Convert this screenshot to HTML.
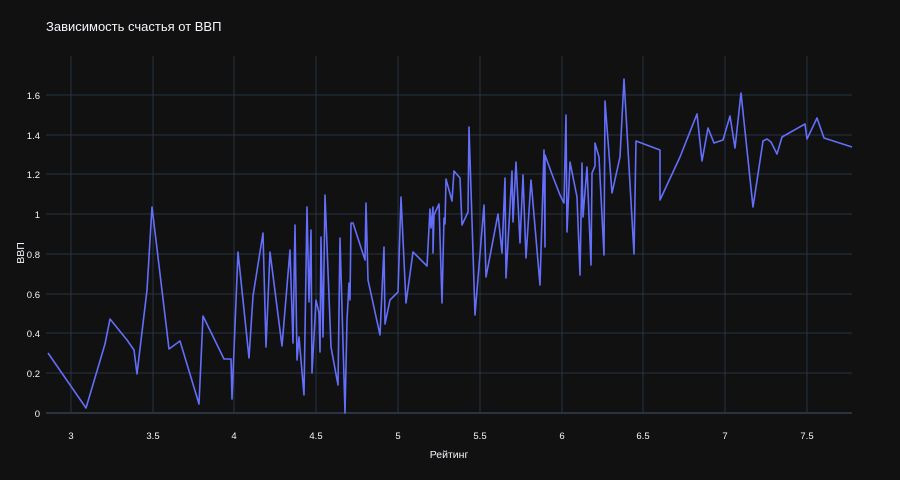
<!DOCTYPE html>
<html><head><meta charset="utf-8"><style>
body{margin:0;background:#111;width:900px;height:480px;overflow:hidden;font-family:"Liberation Sans",sans-serif}
</style></head><body>
<svg width="900" height="480" xmlns="http://www.w3.org/2000/svg" style="display:block">
<rect width="900" height="480" fill="#111"/>
<g stroke="#283442" stroke-width="1">
<line x1="71" y1="56" x2="71" y2="413"/><line x1="153" y1="56" x2="153" y2="413"/><line x1="234" y1="56" x2="234" y2="413"/><line x1="316" y1="56" x2="316" y2="413"/><line x1="398" y1="56" x2="398" y2="413"/><line x1="480" y1="56" x2="480" y2="413"/><line x1="562" y1="56" x2="562" y2="413"/><line x1="643" y1="56" x2="643" y2="413"/><line x1="725" y1="56" x2="725" y2="413"/><line x1="807" y1="56" x2="807" y2="413"/>
<line x1="46" y1="95" x2="852" y2="95"/><line x1="46" y1="135" x2="852" y2="135"/><line x1="46" y1="174" x2="852" y2="174"/><line x1="46" y1="214" x2="852" y2="214"/><line x1="46" y1="254" x2="852" y2="254"/><line x1="46" y1="294" x2="852" y2="294"/><line x1="46" y1="333" x2="852" y2="333"/><line x1="46" y1="373" x2="852" y2="373"/>
</g>
<line x1="46" y1="413" x2="852" y2="413" stroke="#283442" stroke-width="2"/>
<polyline fill="none" stroke="#636efa" stroke-width="1.6" stroke-linejoin="round" points="48,353 86,408 105,344 110,319 127,340 134,350 137,374 147,290 152,207 169,349 180,341 199,404 203,316 224,359 231,359 232,399 238,252 249,358 253,296 263,233 266,347 270,252 282,346 290,250 293,343 295,225 297,360 299,337 304,395 307,207 309,302 311,230 312,373 316,300 319,313 320,352 321,237 323,337 325,195 331,347 338,385 340,238 345,413 347,320 349,283 350,300 351,223 353,223 365,260 366,203 368,280 380,335 384,247 385,324 390,300 398,292 401,197 406,303 413,252 427,266 430,209 431,228 433,207 433,253 434,215 439,204 442,303 444,218 445,224 446,179 452,201 454,171 460,178 462,225 468,212 469,127 475,315 484,205 486,277 498,214 502,253 505,178 506,278 512,171 513,222 516,162 520,243 523,175 526,258 531,180 540,285 544,150 545,247 545,155 553,177 560,195 564,203 566,115 567,232 570,162 577,197 580,275 582,163 583,217 587,167 591,265 592,173 595,166 595,143 599,157 604,255 605,101 612,193 620,157 624,79 634,254 636,141 660,150 660,200 680,157 697,114 702,161 708,128 714,143 723,140 730,116 735,148 741,93 753,207 763,141 767,139 771,142 777,154 782,137 805,124 807,139 817,118 824,138 852,147"/>
<g fill="#f2f5fa" font-size="9.5" text-anchor="end">
<text x="40" y="99">1.6</text><text x="40" y="139">1.4</text><text x="40" y="178">1.2</text><text x="40" y="218">1</text><text x="40" y="258">0.8</text><text x="40" y="298">0.6</text><text x="40" y="337">0.4</text><text x="40" y="377">0.2</text><text x="40" y="417">0</text>
</g>
<g fill="#f2f5fa" font-size="9.5" text-anchor="middle">
<text x="71" y="439">3</text><text x="153" y="439">3.5</text><text x="234" y="439">4</text><text x="316" y="439">4.5</text><text x="398" y="439">5</text><text x="480" y="439">5.5</text><text x="562" y="439">6</text><text x="643" y="439">6.5</text><text x="725" y="439">7</text><text x="807" y="439">7.5</text>
</g>
<text x="449" y="458" fill="#f2f5fa" font-size="10.5" text-anchor="middle">Рейтинг</text>
<text transform="translate(24,253) rotate(-90)" fill="#f2f5fa" font-size="10.5" text-anchor="middle">ВВП</text>
<text x="46" y="31" fill="#f2f5fa" font-size="13">Зависимость счастья от ВВП</text>
</svg>
</body></html>
